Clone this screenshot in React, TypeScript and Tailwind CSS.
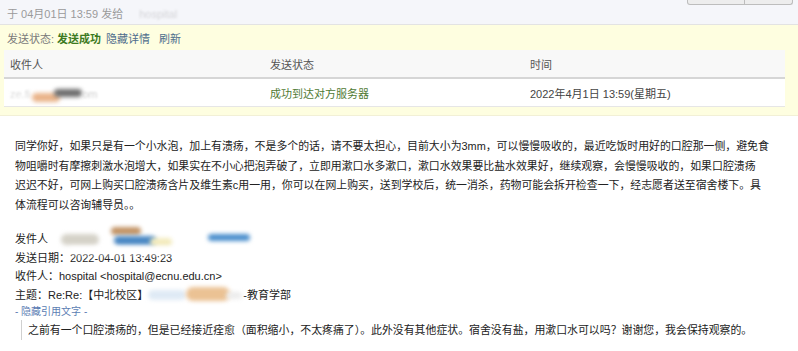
import React from "react";

const font = "font-['Liberation_Sans','Noto_Sans_CJK_SC',sans-serif]";

function Blob({ w, h, c, className = "" }: { w: string; h: string; c: string; className?: string }) {
  return <span className={`inline-block rounded-full align-middle blur-[2px] ${w} ${h} ${c} ${className}`} />;
}

export default function App() {
  return (
    <div className={`w-[798px] h-[351px] overflow-hidden bg-white text-[11px] text-[#222] ${font}`}>
      {/* top bar */}
      <div className="h-[25px] bg-[#f5f6fa] border-b border-[#e3e3e3] flex items-start justify-between pl-[7px] pr-[5px]">
        <div className="pt-[7px] leading-[14px] text-[#9a9a9a] flex items-center">
          <span>于 04月01日 13:59 发给</span>
          <span className="ml-[16px] text-[#d4d4d8] blur-[1px]">hospital</span>
        </div>
        <div className="flex h-[5px] border border-t-0 border-[#bdbdbd] rounded-b-[3px] bg-[#ededed]">
          <div className="w-[57px] border-r border-[#bdbdbd]" />
          <div className="w-[47px]" />
        </div>
      </div>

      {/* yellow status panel */}
      <div className="bg-[#fefee0] pl-[4px] pr-[13px] pb-[8px] border-b border-[#f2f0d6]">
        <div className="h-[25px] pt-[3px] flex items-center pl-[3px]">
          <span className="text-[#7a7a7a]">发送状态:</span>
          <span className="ml-[3px] font-bold text-[#3c7a1f]">发送成功</span>
          <span className="ml-[5px] text-[#4e6d8c]">隐藏详情</span>
          <span className="ml-[9px] text-[#4e6d8c]">刷新</span>
        </div>
        <div className="bg-white">
          <div className="grid grid-cols-[260px_260px_1fr] h-[29px] pt-[4px] items-center bg-[#f8f8f8] border-b-2 border-[#d6d6d6] text-[#555] pl-[6px]">
            <span>收件人</span>
            <span>发送状态</span>
            <span>时间</span>
          </div>
          <div className="grid grid-cols-[260px_260px_1fr] h-[28px] pt-[4px] items-center bg-white border-b border-[#e6e6e6] pl-[6px]">
            <span className="flex items-center">
              <span className="text-[#dcdcdc] blur-[1px]">ze.fi</span>
              <Blob w="w-[28px]" h="h-[9px]" c="bg-[#eab48a]" className="ml-[2px] mt-[5px]" />
              <Blob w="w-[28px]" h="h-[8px]" c="bg-[#6e6e6e]" className="-ml-[6px] -mt-[3px]" />
              <span className="text-[#d0d0d0] blur-[1px]">om</span>
            </span>
            <span className="text-[#4f7a34]">成功到达对方服务器</span>
            <span className="text-[#444]">2022年4月1日 13:59(星期五)</span>
          </div>
        </div>
      </div>

      {/* body */}
      <div className="pl-[15px] pt-[21px] text-[10.9px] leading-[19.5px] text-[#222] whitespace-nowrap">
        <div>同学你好，如果只是有一个小水泡，加上有溃疡，不是多个的话，请不要太担心，目前大小为3mm，可以慢慢吸收的，最近吃饭时用好的口腔那一侧，避免食</div>
        <div>物咀嚼时有摩擦刺激水泡增大，如果实在不小心把泡弄破了，立即用漱口水多漱口，漱口水效果要比盐水效果好，继续观察，会慢慢吸收的，如果口腔溃疡</div>
        <div>迟迟不好，可网上购买口腔溃疡含片及维生素c用一用，你可以在网上购买，送到学校后，统一消杀，药物可能会拆开检查一下，经志愿者送至宿舍楼下。具</div>
        <div>体流程可以咨询辅导员。。</div>
      </div>

      <div className="pl-[15px] pt-[15px] leading-[18.5px] whitespace-nowrap">
        <div className="flex items-center h-[18.5px]">
          <span>发件人</span>
          <span className="relative inline-block w-[200px] h-[18px]">
            <Blob w="w-[38px]" h="h-[11px]" c="bg-[#d5d2c8]" className="absolute left-[13px] top-[4px]" />
            <Blob w="w-[30px]" h="h-[8px]" c="bg-[#c39466]" className="absolute left-[63px] -top-[3px]" />
            <Blob w="w-[42px]" h="h-[9px]" c="bg-[#4a88c4]" className="absolute left-[66px] top-[6px]" />
            <Blob w="w-[22px]" h="h-[8px]" c="bg-[#f3ebbd]" className="absolute left-[102px] top-[8px]" />
            <Blob w="w-[42px]" h="h-[7px]" c="bg-[#4b8fcd]" className="absolute left-[160px] top-[4px]" />
          </span>
        </div>
        <div className="relative">
          发送日期：2022-04-01 13:49:23
          <span className="absolute left-[55px] -top-[2px] w-[130px] h-[8px] bg-white/70 blur-[2px]" />
        </div>
        <div>收件人：hospital &lt;hospital@ecnu.edu.cn&gt;</div>
        <div className="flex items-center">
          <span>主题：Re:Re:【中北校区】</span>
          <span className="relative inline-block w-[95px] h-[18px]">
            <Blob w="w-[38px]" h="h-[10px]" c="bg-[#dfeaf5]" className="absolute left-[0px] top-[4px]" />
            <Blob w="w-[44px]" h="h-[14px]" c="bg-[#ebc294]" className="absolute left-[38px] top-[1px]" />
            <Blob w="w-[16px]" h="h-[7px]" c="bg-[#ececec]" className="absolute left-[78px] top-[6px]" />
          </span>
          <span>-教育学部</span>
        </div>
        <div className="text-[10px] leading-[16px] text-[#5b7db3]">- 隐藏引用文字 -</div>
        <div className="ml-[6px] border-l border-[#d0d0d0] pl-[6px] leading-[20px] text-[10.9px]">
          之前有一个口腔溃疡的，但是已经接近痊愈（面积缩小，不太疼痛了）。此外没有其他症状。宿舍没有盐，用漱口水可以吗？谢谢您，我会保持观察的。
        </div>
      </div>
    </div>
  );
}
